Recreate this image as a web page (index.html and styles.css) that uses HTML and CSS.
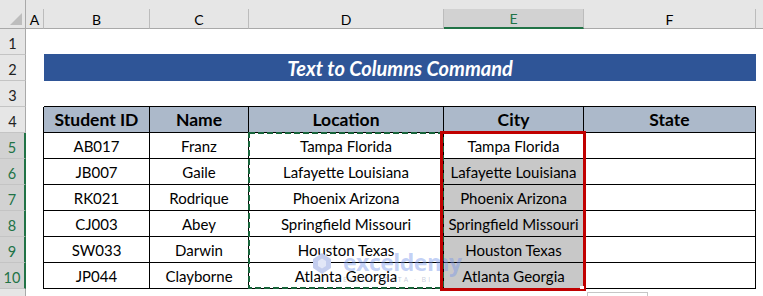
FILE: index.html
```html
<!DOCTYPE html>
<html lang="en">
<head>
<meta charset="utf-8">
<title>Text to Columns Command</title>
<link rel="stylesheet" href="styles.css">
</head>
<body>
<div class="sheet">
  <div class="corner"><div class="tri"></div></div>
  <div class="strip"></div>
  <div class="ch">A</div>
  <div class="ch">B</div>
  <div class="ch">C</div>
  <div class="ch">D</div>
  <div class="ch ch-sel">E</div>
  <div class="ch">F</div>
  <div class="ch ch-last"></div>

  <div class="rh">1</div><div class="c"></div><div class="c"></div><div class="c"></div><div class="c"></div><div class="c"></div><div class="c"></div><div class="c"></div>

  <div class="rh">2</div><div class="c"></div><div class="banner">Text to Columns Command</div><div class="c"></div>

  <div class="rh">3</div><div class="c"></div><div class="c edge"></div><div class="c edge"></div><div class="c edge"></div><div class="c edge"></div><div class="c edge"></div><div class="c"></div>

  <div class="rh">4</div><div class="c lb"></div><div class="t th">Student ID</div><div class="t th">Name</div><div class="t th">Location</div><div class="t th">City</div><div class="t th">State</div><div class="c"></div>

  <div class="rh sel">5</div><div class="c lb"></div><div class="t">AB017</div><div class="t">Franz</div><div class="t">Tampa Florida</div><div class="t active">Tampa Florida</div><div class="t"></div><div class="c"></div>
  <div class="rh sel">6</div><div class="c lb"></div><div class="t">JB007</div><div class="t">Gaile</div><div class="t">Lafayette Louisiana</div><div class="t shade">Lafayette Louisiana</div><div class="t"></div><div class="c"></div>
  <div class="rh sel">7</div><div class="c lb"></div><div class="t">RK021</div><div class="t">Rodrique</div><div class="t">Phoenix Arizona</div><div class="t shade">Phoenix Arizona</div><div class="t"></div><div class="c"></div>
  <div class="rh sel">8</div><div class="c lb"></div><div class="t">CJ003</div><div class="t">Abey</div><div class="t">Springfield Missouri</div><div class="t shade">Springfield Missouri</div><div class="t"></div><div class="c"></div>
  <div class="rh sel">9</div><div class="c lb"></div><div class="t">SW033</div><div class="t">Darwin</div><div class="t">Houston Texas</div><div class="t shade">Houston Texas</div><div class="t"></div><div class="c"></div>
  <div class="rh sel">10</div><div class="c lb"></div><div class="t">JP044</div><div class="t">Clayborne</div><div class="t">Atlanta Georgia</div><div class="t shade">Atlanta Georgia</div><div class="t"></div><div class="c"></div>

  <div class="rh rh-end"></div><div class="c tail"></div>

  <div class="watermark">
    <svg class="wm-icon" width="22" height="24" viewBox="0 0 22 24"><path d="M2 8 L11 2 L20 8 L20 17 L11 23 L2 17 Z" fill="#c3cdee"/><path d="M7 10 L11 7.5 L15 10 L15 15 L11 17.5 L7 15 Z" fill="#e2e7f7"/></svg>
    <div class="wm-text">
      <span class="wm-name">exceldemy</span>
      <span class="wm-sub">EXCEL · DATA · BI</span>
    </div>
  </div>

  <svg class="ants" width="196" height="158" viewBox="0 0 196 158"><rect x="1" y="1" width="194" height="155" fill="none" stroke="#17643a" stroke-width="2" stroke-dasharray="6 3"/></svg>
  <div class="redbox"><span class="handle"></span></div>
  <div class="paste"></div>
</div>
</body>
</html>
```

FILE: styles.css
```css
html, body {
  margin: 0;
  padding: 0;
  background: #ffffff;
  overflow: hidden;
}

.sheet {
  position: relative;
  width: 763px;
  height: 296px;
  display: grid;
  grid-template-columns: 26px 18px 106px 99px 195px 140px 172px 1fr;
  grid-template-rows: 9px 20px repeat(10, 26px) 1fr;
  font-family: Lato, "Liberation Sans", sans-serif;
  color: #000;
}

.corner {
  grid-row: span 2;
  background: #e6e6e6;
  border-right: 1px solid #a9a9a9;
  border-bottom: 1px solid #a9a9a9;
  position: relative;
}

.tri {
  position: absolute;
  left: 10px;
  top: 13px;
  width: 0;
  height: 0;
  border-left: 12px solid transparent;
  border-bottom: 12px solid #bdbdbd;
}

.strip {
  grid-column: 2 / -1;
  background: #e6e6e6;
}

.ch {
  background: #e6e6e6;
  border-right: 1px solid #bcbcbc;
  border-bottom: 1px solid #a9a9a9;
  display: flex;
  align-items: center;
  justify-content: center;
  font-size: 14px;
  padding-top: 1px;
  box-sizing: border-box;
}

.ch-sel {
  background: #d2d2d2;
  color: #217346;
  border-bottom: 2px solid #217346;
}

.ch-last {
  border-right: none;
}

.rh {
  background: #e6e6e6;
  border-right: 1px solid #a9a9a9;
  border-bottom: 1px solid #c4c4c4;
  box-sizing: border-box;
  display: flex;
  align-items: flex-end;
  justify-content: center;
  padding-bottom: 2px;
  font-size: 14.5px;
  color: #222;
}

.rh.sel {
  background: #d2d2d2;
  color: #217346;
  border-right: 2px solid #217346;
}

.rh-end {
  border-bottom: none;
}

.c {
  box-sizing: border-box;
}

.tail {
  grid-column: 2 / -1;
}

.edge {
  border-bottom: 1px solid #000;
}

.lb {
  border-right: 1px solid #000;
}

.banner {
  grid-column: span 5;
  background: #2f5597;
  color: #ffffff;
  font-weight: bold;
  font-style: italic;
  font-size: 20px;
  display: flex;
  align-items: center;
  justify-content: center;
  margin-top: -1px;
}

.t {
  box-sizing: border-box;
  border-right: 1px solid #000;
  border-bottom: 1px solid #000;
  display: flex;
  align-items: center;
  justify-content: center;
  font-size: 15px;
  white-space: nowrap;
  overflow: hidden;
  padding-top: 1px;
}

.th {
  background: #acb9ca;
  font-weight: bold;
  font-size: 17.5px;
  padding-top: 0;
}

.shade {
  background: #c8c8c8;
}

.active {
  background: #ffffff;
}

.watermark {
  position: absolute;
  left: 311px;
  top: 251px;
  display: flex;
  align-items: flex-start;
  gap: 10px;
  pointer-events: none;
}

.wm-text {
  display: flex;
  flex-direction: column;
  line-height: 1;
}

.wm-name {
  font-family: "Open Sans", sans-serif;
  font-weight: bold;
  font-size: 23px;
  color: rgba(120, 150, 235, 0.45);
  letter-spacing: -0.5px;
}

.wm-sub {
  font-family: "Open Sans", sans-serif;
  font-size: 7px;
  letter-spacing: 2px;
  color: rgba(130, 140, 175, 0.45);
  margin-top: 2px;
}

.ants {
  position: absolute;
  left: 248px;
  top: 132px;
}

.redbox {
  position: absolute;
  left: 440px;
  top: 131px;
  width: 146px;
  height: 160px;
  border: 3px solid #c00000;
  box-sizing: border-box;
}

.handle {
  position: absolute;
  right: -1px;
  bottom: -1px;
  width: 4px;
  height: 3px;
  background: #ffffff;
}

.paste {
  position: absolute;
  left: 587px;
  top: 292px;
  width: 61px;
  height: 12px;
  background: #ffffff;
  border: 1px solid #c6c6c6;
  box-sizing: border-box;
}
```
